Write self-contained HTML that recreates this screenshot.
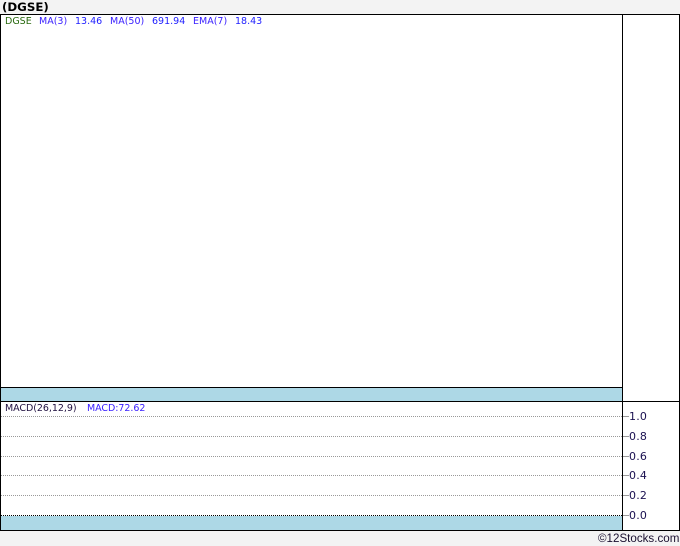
<!DOCTYPE html>
<html><head><meta charset="utf-8"><style>
html,body{margin:0;padding:0}
body{width:680px;height:546px;background:#f3f3f3;position:relative;overflow:hidden;font-family:"DejaVu Sans",sans-serif}
div{position:absolute}
.t{white-space:nowrap;font-size:9.5px;line-height:12px;height:12px}
.g{left:1px;width:621px;height:0;border-top:1px dotted #999}
.k{left:623px;width:6px;height:1px;background:#999}
.y{left:629px;white-space:nowrap;font-family:"DejaVu Sans",sans-serif;font-size:11px;line-height:14px;color:#1a1050;letter-spacing:.2px}
</style></head><body>
<div style="left:2px;top:0;font:bold 11.8px/14px 'DejaVu Sans',sans-serif;color:#000;white-space:nowrap">(DGSE)</div>
<div style="left:0;top:14px;width:680px;height:517px;background:#fff"></div>
<div style="left:1px;top:388px;width:621px;height:13px;background:#add8e6"></div>
<div style="left:1px;top:516px;width:621px;height:14px;background:#add8e6"></div>
<div style="left:0;top:14px;width:680px;height:1px;background:#000"></div>
<div style="left:0;top:387px;width:622px;height:1px;background:#000"></div>
<div style="left:0;top:401px;width:680px;height:1px;background:#000"></div>
<div style="left:0;top:530px;width:680px;height:1px;background:#000"></div>
<div style="left:0;top:14px;width:1px;height:517px;background:#000"></div>
<div style="left:622px;top:14px;width:1px;height:517px;background:#000"></div>
<div style="left:679px;top:14px;width:1px;height:517px;background:#000"></div>
<div class="g" style="top:416px"></div>
<div class="g" style="top:436px"></div>
<div class="g" style="top:456px"></div>
<div class="g" style="top:475px"></div>
<div class="g" style="top:495px"></div>
<div class="g" style="top:515px;border-top-color:#000"></div>
<div class="k" style="top:416px"></div>
<div class="k" style="top:436px"></div>
<div class="k" style="top:456px"></div>
<div class="k" style="top:475px"></div>
<div class="k" style="top:495px"></div>
<div class="k" style="top:515px"></div>
<div class="y" style="top:410px">1.0</div>
<div class="y" style="top:430px">0.8</div>
<div class="y" style="top:450px">0.6</div>
<div class="y" style="top:469px">0.4</div>
<div class="y" style="top:489px">0.2</div>
<div class="y" style="top:509px">0.0</div>
<div class="t" style="left:5px;top:16px;color:#2a6a10">DGSE</div>
<div class="t" style="left:39px;top:16px;color:#3a20ff">MA(3)</div>
<div class="t" style="left:75px;top:16px;color:#2020ff">13.46</div>
<div class="t" style="left:110px;top:16px;color:#3a20ff">MA(50)</div>
<div class="t" style="left:152px;top:16px;color:#2020ff">691.94</div>
<div class="t" style="left:193px;top:16px;color:#3a20ff">EMA(7)</div>
<div class="t" style="left:235px;top:16px;color:#2020ff">18.43</div>
<div class="t" style="left:5px;top:403px;color:#201040;letter-spacing:-.05px">MACD(26,12,9)</div>
<div class="t" style="left:87px;top:403px;color:#3a20ff;letter-spacing:-.05px">MACD:72.62</div>
<div style="left:598px;top:531px;white-space:nowrap;font:11.6px/15px 'Liberation Sans',sans-serif;color:#1a1030">©12Stocks.com</div>
</body></html>
